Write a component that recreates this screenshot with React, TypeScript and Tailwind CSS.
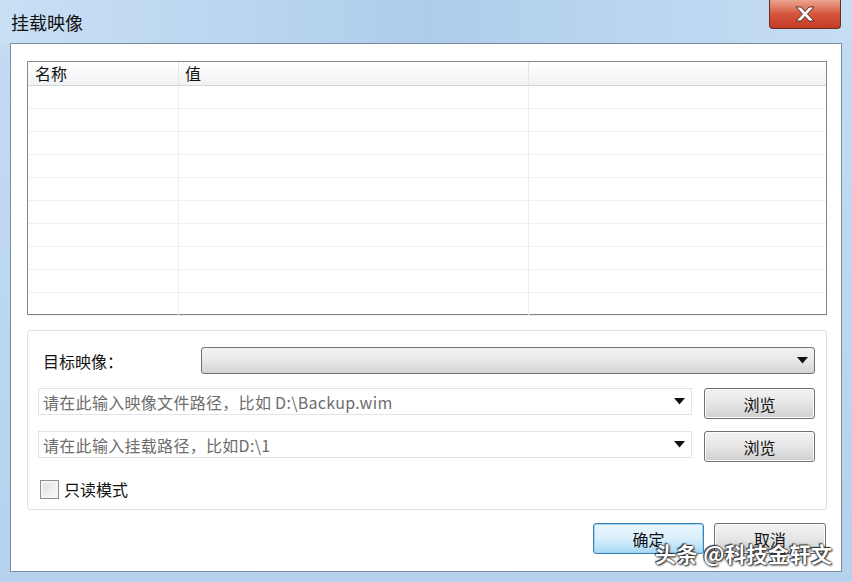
const cjk = { fontFamily: '"Noto Sans CJK SC", "Liberation Sans", sans-serif' };

function Arrow() {
  return (
    <svg width="11" height="7" viewBox="0 0 11 7" className="shrink-0">
      <path d="M0 0 H11 L5.5 6.5 Z" fill="#111" />
    </svg>
  );
}

function Button({ label, focused = false, className = "" }: { label: string; focused?: boolean; className?: string }) {
  return (
    <div
      className={`flex items-center justify-center rounded-[3px] border text-[16px] text-[#111] ${
        focused
          ? "border-[#3c7fb1] bg-gradient-to-b from-[#eaf6fd] via-[#d9f0fc] to-[#a7d9f5] shadow-[inset_0_0_0_1px_#9fd7f4]"
          : "border-[#707070] bg-gradient-to-b from-[#f2f2f2] via-[#e6e6e6] to-[#cfcfcf] shadow-[inset_0_0_0_1px_#fcfcfc]"
      } ${className}`}
    >
      {label}
    </div>
  );
}

function ComboInput({ placeholder }: { placeholder: string }) {
  return (
    <div className="flex h-[27px] w-[654px] items-center justify-between border border-[#e2e3ea] bg-white pl-[4px] pr-[6px]">
      <span className="text-[16px] tracking-[0.3px] text-[#6d6d6d]">{placeholder}</span>
      <Arrow />
    </div>
  );
}

export default function App() {
  const rows = Array.from({ length: 10 });
  return (
    <div className="relative flex h-[582px] w-[852px] flex-col overflow-hidden bg-gradient-to-b from-[#c4dcf2] via-[#bcd7f0] to-[#b4d1ee]" style={cjk}>
      {/* title bar */}
      <div className="flex h-[43px] shrink-0 items-start justify-between bg-gradient-to-r from-[#c9e0f5] via-[#aecdeb] to-[#c6def4]">
        <div className="pl-[11px] pt-[9px] text-[18px] leading-[26px] text-[#111]">挂载映像</div>
        <div className="mr-[11px] flex h-[29px] w-[72px] items-center justify-center rounded-b-[4px] border border-t-0 border-[#6b2a22] bg-gradient-to-b from-[#e9a48f] via-[#d5553d] to-[#c43b25]">
          <svg width="24" height="18" viewBox="0 0 24 18">
            <path d="M3 2 L8 2 L12 6.5 L16 2 L21 2 L14.5 9 L21 16 L16 16 L12 11.5 L8 16 L3 16 L9.5 9 Z" fill="#fff" stroke="#5a2a22" strokeWidth="1" />
          </svg>
        </div>
      </div>

      {/* client area */}
      <div className="mx-[10px] mb-[10px] flex flex-1 flex-col border border-[#7d8da0] bg-white pl-[16px] pt-[17px]">
        {/* property table */}
        <div className="flex h-[254px] w-[800px] flex-col border border-[#828790]">
          <div className="flex h-[24px] shrink-0 border-b border-[#d5d5d5] bg-gradient-to-b from-[#ffffff] to-[#f1f2f4] text-[16px] leading-[23px] text-[#111]">
            <div className="w-[151px] border-r border-[#e5e5e5] pl-[7px]">名称</div>
            <div className="w-[350px] border-r border-[#e5e5e5] pl-[6px]">值</div>
            <div className="flex-1" />
          </div>
          {rows.map((_, i) => (
            <div key={i} className="flex h-[23px] shrink-0 border-b border-[#f0f0f0]">
              <div className="w-[151px] border-r border-[#f0f0f0]" />
              <div className="w-[350px] border-r border-[#f0f0f0]" />
              <div className="flex-1" />
            </div>
          ))}
        </div>

        {/* options group */}
        <div className="mt-[15px] flex h-[180px] w-[800px] flex-col rounded-[3px] border border-[#dcdfe3] pl-[10px] pr-[11px] pt-[16px]">
          <div className="flex items-center justify-between">
            <span className="pl-[5px] text-[16px] text-[#111]">目标映像：</span>
            <div className="flex h-[27px] w-[614px] items-center justify-end rounded-[3px] border border-[#707070] bg-gradient-to-b from-[#f2f2f2] via-[#e8e8e8] to-[#d3d3d3] pr-[6px]">
              <Arrow />
            </div>
          </div>
          <div className="mt-[14px] flex items-start justify-between">
            <ComboInput placeholder="请在此输入映像文件路径，比如 D:\Backup.wim" />
            <Button label="浏览" className="h-[31px] w-[111px]" />
          </div>
          <div className="mt-[12px] flex items-start justify-between">
            <ComboInput placeholder="请在此输入挂载路径，比如D:\1" />
            <Button label="浏览" className="h-[31px] w-[111px]" />
          </div>
          <div className="mt-[15px] flex items-center gap-[5px] pl-[2px]">
            <div className="h-[19px] w-[19px] border border-[#8e8f8f] bg-gradient-to-br from-[#dcdcdc] to-[#fbfbfb] shadow-[inset_0_0_0_2px_#f4f4f4]" />
            <span className="text-[16px] text-[#111]">只读模式</span>
          </div>
        </div>

        {/* dialog buttons */}
        <div className="mt-[13px] flex w-[799px] justify-end gap-[10px]">
          <Button label="确定" focused className="h-[31px] w-[111px]" />
          <Button label="取消" className="h-[31px] w-[112px]" />
        </div>
      </div>

      {/* watermark */}
      <div
        className="absolute left-[655px] top-[538px] text-[21px] font-bold tracking-[0.5px] text-white"
        style={{ textShadow: "0 0 2px #222, 1px 1px 2px #222, -1px -1px 1px #333" }}
      >
        头条 @科技金轩文
      </div>
    </div>
  );
}
